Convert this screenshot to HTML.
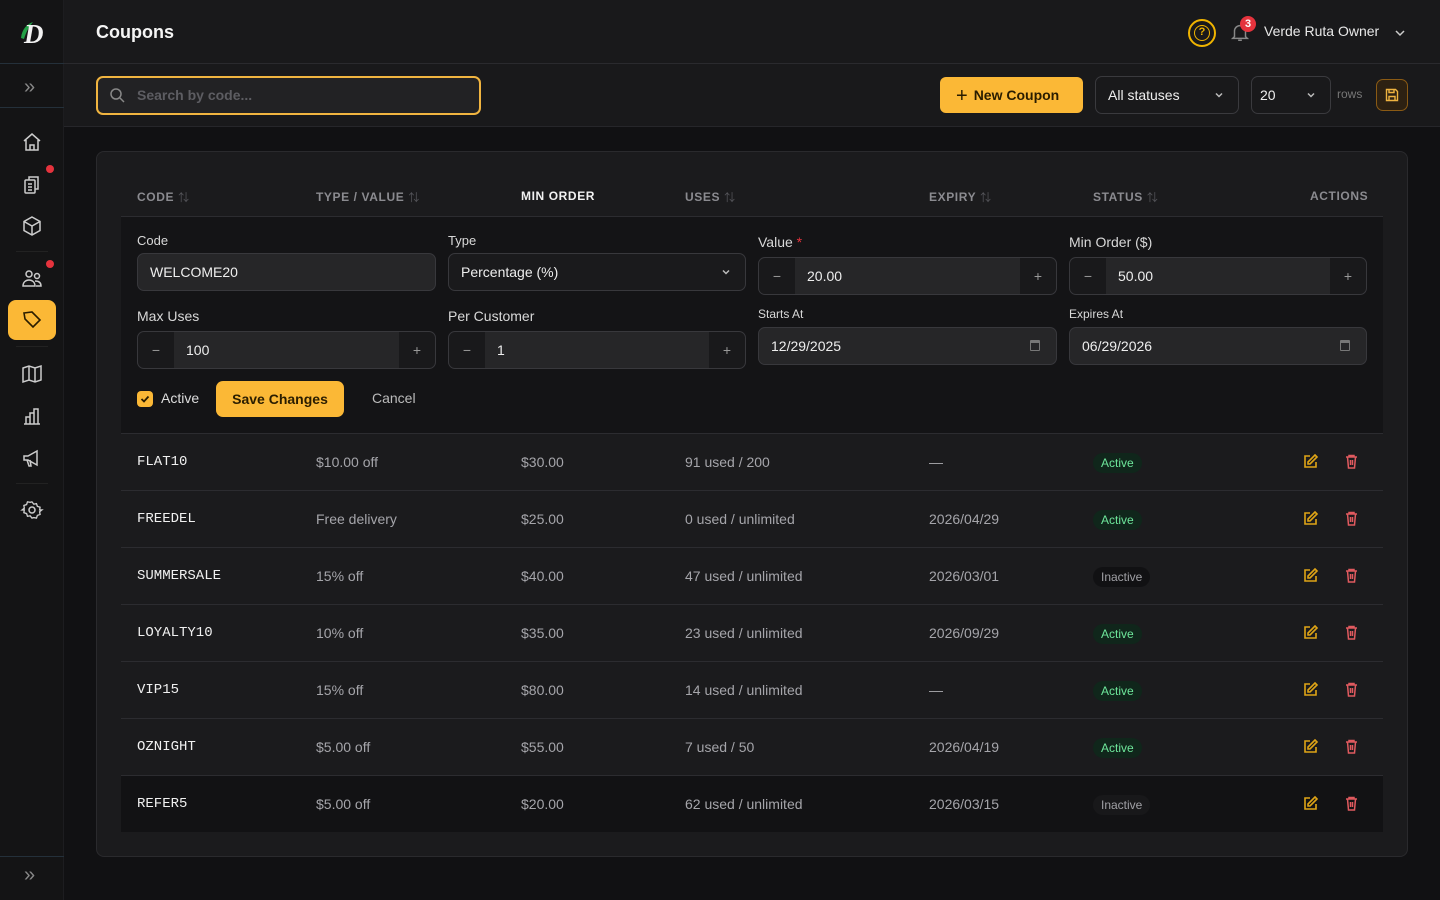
<!DOCTYPE html>
<html><head><meta charset="utf-8"><style>
*{box-sizing:border-box;margin:0;padding:0}
body{width:1440px;height:900px;overflow:hidden;background:#111113;font-family:"Liberation Sans","Noto Sans CJK JP",sans-serif;color:#e6e6e6;position:relative;font-size:14px}
.a{position:absolute}
.sb{left:0;top:0;width:64px;height:900px;background:#141415;border-right:1px solid #1d1d20}
.ic{position:absolute;left:20px;width:24px;height:24px}
svg{display:block}
.hdr{left:64px;top:0;width:1376px;height:64px;background:#19191b;border-bottom:1px solid #2a2a2e}
.tb{left:64px;top:64px;width:1376px;height:63px;background:#19191b;border-bottom:1px solid #26262a}
.card{left:96px;top:151px;width:1312px;height:706px;background:#1b1b1d;border:1px solid #2a2a2d;border-radius:8px}
.th{top:189px;font-size:12px;font-weight:bold;letter-spacing:.6px;color:#8b8b90}
.th span{color:#55555a;font-weight:normal;margin-left:4px;font-size:11px}
.lbl{font-size:13px;color:#d8d8d8}
.inp{height:38px;background:#262628;border:1px solid #38383c;border-radius:7px;font-size:14px;color:#eee;padding:0 12px;line-height:36px}
.step{height:38px;border:1px solid #38383c;border-radius:7px;background:#19191b;overflow:hidden}
.step .m{position:absolute;left:0;top:0;width:36px;height:36px;text-align:center;line-height:36px;color:#999}
.step .v{position:absolute;left:36px;top:0;right:36px;height:36px;background:#262628;line-height:36px;padding-left:12px;font-size:14px;color:#eee}
.step .p{position:absolute;right:0;top:0;width:36px;height:36px;text-align:center;line-height:36px;color:#999}
.row{left:121px;width:1262px;height:57px;border-top:1px solid #2c2c30}
.row div{position:absolute;top:0;line-height:56px;font-size:14px;color:#a5a5aa}
.row .c{left:16px;font-family:"Liberation Mono",monospace;color:#f0f0f0;font-size:14px}
.pill{position:absolute;top:19px!important;height:20px;line-height:20px!important;padding:0 8px;border-radius:10px;font-size:12px!important}
.act{background:#10261b;color:#6ee79b!important;left:972px}
.ina{background:#111113;color:#a0a0a5!important;left:972px}
</style></head><body>
<div class="a sb">
 <div class="a" style="left:18px;top:18px;width:28px;height:28px">
  <svg width="28" height="28" viewBox="0 0 28 28"><path d="M3 20 C4 11 9 6 15 4 C11 9 8 14 6 21Z" fill="#22a045"/><text x="6" y="25" font-family="Liberation Serif" font-style="italic" font-weight="bold" font-size="27" fill="#f2f2f2">D</text></svg>
 </div>
 <div class="a" style="left:0;top:63px;width:64px;height:1px;background:#24303a"></div>
 <div class="a" style="left:0;top:107px;width:64px;height:1px;background:#24303a"></div>
 <div class="a" style="left:24px;top:76px;color:#888;font-size:20px">»</div>
 <svg class="ic" style="top:130px" viewBox="0 0 24 24" fill="none" stroke="#ccc" stroke-width="1.5"><path d="M4 11l8-7 8 7M6 10v10h12V10M10 20v-5h4v5"/></svg>
 <svg class="ic" style="top:172px" viewBox="0 0 24 24" fill="none" stroke="#ccc" stroke-width="1.5"><rect x="5" y="8" width="10" height="13" rx="1"/><path d="M9 8V5h9v12h-3M8 12h4M8 15h4M8 18h4"/></svg>
 <div class="a" style="left:46px;top:165px;width:8px;height:8px;border-radius:50%;background:#e5333d"></div>
 <svg class="ic" style="top:214px" viewBox="0 0 24 24" fill="none" stroke="#ccc" stroke-width="1.5"><path d="M12 3l8 4.5v9L12 21l-8-4.5v-9zM4 7.5l8 4.5 8-4.5M12 12v9"/></svg>
 <div class="a" style="left:16px;top:251px;width:32px;height:1px;background:#222"></div>
 <svg class="ic" style="top:266px" viewBox="0 0 24 24" fill="none" stroke="#ccc" stroke-width="1.5"><circle cx="9" cy="8" r="3"/><circle cx="17" cy="10" r="2.5"/><path d="M3 20c0-4 3-6 6-6s6 2 6 6zM15 15c3 0 6 1 6 5h-5"/></svg>
 <div class="a" style="left:46px;top:260px;width:8px;height:8px;border-radius:50%;background:#e5333d"></div>
 <div class="a" style="left:8px;top:300px;width:48px;height:40px;border-radius:8px;background:#fbb836"></div>
 <svg class="ic" style="top:308px" viewBox="0 0 24 24" fill="none" stroke="#2a1d00" stroke-width="1.6"><path d="M4 5l8-1 8 8-7 7-8-8zM8 8h.01"/></svg>
 <div class="a" style="left:16px;top:346px;width:32px;height:1px;background:#222"></div>
 <svg class="ic" style="top:362px" viewBox="0 0 24 24" fill="none" stroke="#ccc" stroke-width="1.5"><path d="M3 6l6-2 6 2 6-2v14l-6 2-6-2-6 2zM9 4v14M15 6v14"/></svg>
 <svg class="ic" style="top:404px" viewBox="0 0 24 24" fill="none" stroke="#ccc" stroke-width="1.5"><path d="M4 20h16M6 20v-7h4v7M10 20V9h4v11M14 20V5h4v15"/></svg>
 <svg class="ic" style="top:446px" viewBox="0 0 24 24" fill="none" stroke="#ccc" stroke-width="1.5"><path d="M4 10h4l9-5v14l-9-5H4zM7 14l2 6h2l-1-6"/></svg>
 <div class="a" style="left:16px;top:483px;width:32px;height:1px;background:#222"></div>
 <svg class="ic" style="top:498px" viewBox="0 0 24 24" fill="none" stroke="#ccc" stroke-width="1.5"><circle cx="12" cy="12" r="3"/><path d="M12 3l2 2.5 3-.5 1 3 3 1-.5 3L23 12l-2.5 2 .5 3-3 1-1 3-3-.5L12 21l-2-2.5-3 .5-1-3-3-1 .5-3L1 12l2.5-2-.5-3 3-1 1-3 3 .5z" transform="scale(.9) translate(1.3 1.3)"/></svg>
 <div class="a" style="left:0;top:856px;width:64px;height:1px;background:#24303a"></div>
 <div class="a" style="left:24px;top:864px;color:#888;font-size:20px">»</div>
</div>

<div class="a hdr">
 <div class="a" style="left:32px;top:22px;font-size:18px;font-weight:bold;color:#f5f5f5">Coupons</div>
 <div class="a" style="left:1124px;top:19px;width:28px;height:28px;border:2px solid #f0b400;border-radius:50%"></div>
 <div class="a" style="left:1130px;top:25px;width:16px;height:16px;border:1.5px solid #f0b400;border-radius:50%;color:#f0b400;text-align:center;line-height:13px;font-size:11px;font-weight:bold">?</div>
 <svg class="a" style="left:1165px;top:20px" width="22" height="24" viewBox="0 0 24 24" fill="none" stroke="#888" stroke-width="1.6"><path d="M6 17V11a6 6 0 0112 0v6l2 2H4zM10 21h4"/></svg>
 <div class="a" style="left:1176px;top:16px;width:16px;height:16px;border-radius:50%;background:#e5333d;color:#fff;font-size:11px;font-weight:bold;text-align:center;line-height:16px">3</div>
 <div class="a" style="left:1200px;top:23px;font-size:14px;color:#e8e8e8">Verde Ruta Owner</div>
 <svg class="a" style="left:1329px;top:26px" width="14" height="14" viewBox="0 0 14 14" fill="none" stroke="#ccc" stroke-width="1.5"><path d="M3 5l4 4 4-4"/></svg>
</div>

<div class="a tb">
 <div class="a" style="left:32px;top:12px;width:385px;height:39px;border:2px solid #f0b440;border-radius:7px;background:#222224"></div>
 <svg class="a" style="left:44px;top:22px" width="18" height="18" viewBox="0 0 18 18" fill="none" stroke="#888" stroke-width="1.5"><circle cx="8" cy="8" r="5"/><path d="M12 12l4 4"/></svg>
 <div class="a" style="left:73px;top:23px;font-size:14px;color:#5d5d62;font-weight:bold">Search by code...</div>
 <div class="a" style="left:876px;top:13px;width:143px;height:36px;background:#fbb836;border-radius:6px;color:#2a1d00;font-weight:bold;font-size:14px;line-height:36px;padding-left:16px"><span style="font-size:20px;font-weight:normal;vertical-align:-2px;margin-right:6px">+</span>New Coupon</div>
 <div class="a" style="left:1031px;top:12px;width:144px;height:38px;border:1px solid #3a3a3e;border-radius:7px;font-size:14px;line-height:36px;padding-left:12px;color:#eee">All statuses</div>
 <svg class="a" style="left:1149px;top:25px" width="12" height="12" viewBox="0 0 12 12" fill="none" stroke="#bbb" stroke-width="1.5"><path d="M3 4.5l3 3 3-3"/></svg>
 <div class="a" style="left:1187px;top:12px;width:80px;height:38px;border:1px solid #3a3a3e;border-radius:7px;font-size:14px;line-height:36px;padding-left:8px;color:#eee">20</div>
 <svg class="a" style="left:1241px;top:25px" width="12" height="12" viewBox="0 0 12 12" fill="none" stroke="#bbb" stroke-width="1.5"><path d="M3 4.5l3 3 3-3"/></svg>
 <div class="a" style="left:1273px;top:23px;font-size:12px;color:#777">rows</div>
 <div class="a" style="left:1312px;top:15px;width:32px;height:32px;border:1px solid #8a5a14;background:#2d2112;border-radius:7px"></div>
 <svg class="a" style="left:1320px;top:23px" width="16" height="16" viewBox="0 0 16 16" fill="none" stroke="#f0b440" stroke-width="1.4"><path d="M2.5 2.5h9l2 2v9h-11zM5 2.5v3h5v-3M5 13.5v-4h6v4"/></svg>
</div>

<div class="a card"></div>
<div class="a th" style="left:137px">CODE<span>⇅</span></div>
<div class="a th" style="left:316px">TYPE / VALUE<span>⇅</span></div>
<div class="a th" style="left:521px;color:#f2f2f2">MIN ORDER</div>
<div class="a th" style="left:685px">USES<span>⇅</span></div>
<div class="a th" style="left:929px">EXPIRY<span>⇅</span></div>
<div class="a th" style="left:1093px">STATUS<span>⇅</span></div>
<div class="a th" style="left:1310px">ACTIONS</div>
<div class="a" style="left:121px;top:216px;width:1262px;height:1px;background:#2c2c30"></div>
<div class="a" style="left:121px;top:217px;width:1262px;height:216px;background:#141416"></div>

<div class="a lbl" style="left:137px;top:233px">Code</div>
<div class="a inp" style="left:137px;top:253px;width:299px">WELCOME20</div>
<div class="a lbl" style="left:448px;top:233px">Type</div>
<div class="a inp" style="left:448px;top:253px;width:298px;background:#1a1a1c">Percentage (%)</div>
<svg class="a" style="left:720px;top:266px" width="12" height="12" viewBox="0 0 12 12" fill="none" stroke="#bbb" stroke-width="1.5"><path d="M3 4.5l3 3 3-3"/></svg>
<div class="a lbl" style="left:758px;top:234px;font-size:14px">Value <span style="color:#e5333d">*</span></div>
<div class="a step" style="left:758px;top:257px;width:299px"><div class="m">−</div><div class="v">20.00</div><div class="p">+</div></div>
<div class="a lbl" style="left:1069px;top:234px;font-size:14px">Min Order ($)</div>
<div class="a step" style="left:1069px;top:257px;width:298px"><div class="m">−</div><div class="v">50.00</div><div class="p">+</div></div>

<div class="a lbl" style="left:137px;top:308px;font-size:14px">Max Uses</div>
<div class="a step" style="left:137px;top:331px;width:299px"><div class="m">−</div><div class="v">100</div><div class="p">+</div></div>
<div class="a lbl" style="left:448px;top:308px;font-size:14px">Per Customer</div>
<div class="a step" style="left:448px;top:331px;width:298px"><div class="m">−</div><div class="v">1</div><div class="p">+</div></div>
<div class="a lbl" style="left:758px;top:307px;font-size:12px">Starts At</div>
<div class="a inp" style="left:758px;top:327px;width:299px">12/29/2025</div>
<div class="a" style="left:1030px;top:340px;width:10px;height:11px;border:1.5px solid #777;border-top-width:3px;border-radius:1px"></div>
<div class="a lbl" style="left:1069px;top:307px;font-size:12px">Expires At</div>
<div class="a inp" style="left:1069px;top:327px;width:298px">06/29/2026</div>
<div class="a" style="left:1340px;top:340px;width:10px;height:11px;border:1.5px solid #777;border-top-width:3px;border-radius:1px"></div>

<div class="a" style="left:137px;top:391px;width:16px;height:16px;border-radius:4px;background:#fbb836"></div>
<svg class="a" style="left:139px;top:393px" width="12" height="12" viewBox="0 0 12 12" fill="none" stroke="#2a1d00" stroke-width="1.8"><path d="M2.5 6l2.5 2.5 4.5-5"/></svg>
<div class="a" style="left:161px;top:390px;font-size:14px;color:#ddd">Active</div>
<div class="a" style="left:216px;top:381px;width:128px;height:36px;border-radius:7px;background:#fbb836;color:#2a1d00;font-weight:bold;text-align:center;line-height:36px;font-size:14px">Save Changes</div>
<div class="a" style="left:372px;top:390px;font-size:14px;color:#bbb">Cancel</div>

<div class="a row" style="top:433px"><div class="c">FLAT10</div><div style="left:195px">$10.00 off</div><div style="left:400px">$30.00</div><div style="left:564px">91 used / 200</div><div style="left:808px">—</div><div class="pill act">Active</div></div>
<div class="a row" style="top:490px"><div class="c">FREEDEL</div><div style="left:195px">Free delivery</div><div style="left:400px">$25.00</div><div style="left:564px">0 used / unlimited</div><div style="left:808px">2026/04/29</div><div class="pill act">Active</div></div>
<div class="a row" style="top:547px"><div class="c">SUMMERSALE</div><div style="left:195px">15% off</div><div style="left:400px">$40.00</div><div style="left:564px">47 used / unlimited</div><div style="left:808px">2026/03/01</div><div class="pill ina">Inactive</div></div>
<div class="a row" style="top:604px"><div class="c">LOYALTY10</div><div style="left:195px">10% off</div><div style="left:400px">$35.00</div><div style="left:564px">23 used / unlimited</div><div style="left:808px">2026/09/29</div><div class="pill act">Active</div></div>
<div class="a row" style="top:661px"><div class="c">VIP15</div><div style="left:195px">15% off</div><div style="left:400px">$80.00</div><div style="left:564px">14 used / unlimited</div><div style="left:808px">—</div><div class="pill act">Active</div></div>
<div class="a row" style="top:718px"><div class="c">OZNIGHT</div><div style="left:195px">$5.00 off</div><div style="left:400px">$55.00</div><div style="left:564px">7 used / 50</div><div style="left:808px">2026/04/19</div><div class="pill act">Active</div></div>
<div class="a row" style="top:775px;background:#121214"><div class="c">REFER5</div><div style="left:195px">$5.00 off</div><div style="left:400px">$20.00</div><div style="left:564px">62 used / unlimited</div><div style="left:808px">2026/03/15</div><div class="pill ina" style="background:#18181a">Inactive</div></div>

<svg width="0" height="0" style="position:absolute"><defs>
<g id="ed" fill="none" stroke="#e0a516" stroke-width="1.6"><path d="M8 3H3v11h11V9"/><path d="M13 2l2 2-7 7H6V9z"/></g>
<g id="tr" fill="none" stroke="#e05a5f" stroke-width="1.5"><path d="M3 4h11M6 4V2.5h5V4M4.5 4l1 11h6l1-11M7.5 7v5M9.5 7v5"/></g>
</defs></svg>
<svg class="a" style="left:1302px;top:453px" width="17" height="17"><use href="#ed"/></svg><svg class="a" style="left:1343px;top:453px" width="17" height="17"><use href="#tr"/></svg>
<svg class="a" style="left:1302px;top:510px" width="17" height="17"><use href="#ed"/></svg><svg class="a" style="left:1343px;top:510px" width="17" height="17"><use href="#tr"/></svg>
<svg class="a" style="left:1302px;top:567px" width="17" height="17"><use href="#ed"/></svg><svg class="a" style="left:1343px;top:567px" width="17" height="17"><use href="#tr"/></svg>
<svg class="a" style="left:1302px;top:624px" width="17" height="17"><use href="#ed"/></svg><svg class="a" style="left:1343px;top:624px" width="17" height="17"><use href="#tr"/></svg>
<svg class="a" style="left:1302px;top:681px" width="17" height="17"><use href="#ed"/></svg><svg class="a" style="left:1343px;top:681px" width="17" height="17"><use href="#tr"/></svg>
<svg class="a" style="left:1302px;top:738px" width="17" height="17"><use href="#ed"/></svg><svg class="a" style="left:1343px;top:738px" width="17" height="17"><use href="#tr"/></svg>
<svg class="a" style="left:1302px;top:795px" width="17" height="17"><use href="#ed"/></svg><svg class="a" style="left:1343px;top:795px" width="17" height="17"><use href="#tr"/></svg>
</body></html>
